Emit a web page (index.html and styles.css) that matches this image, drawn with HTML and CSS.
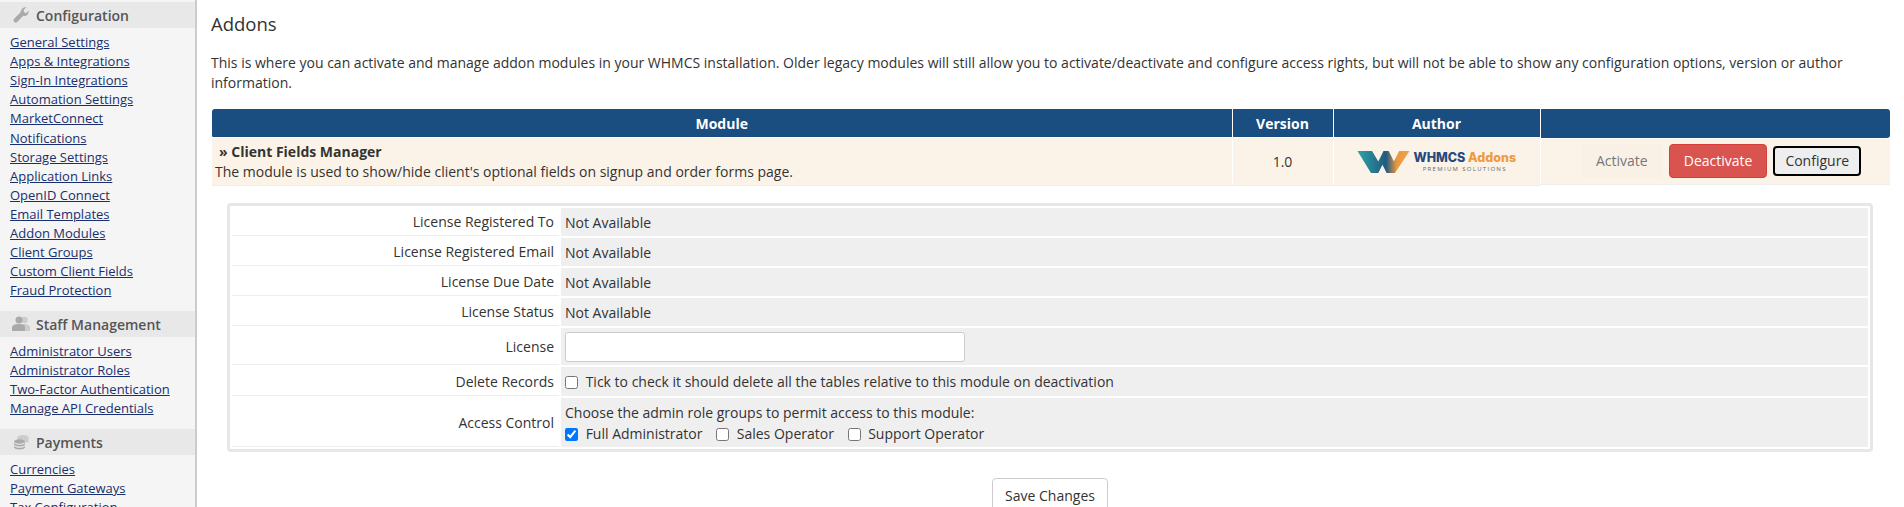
FILE: index.html
```html
<!DOCTYPE html>
<html lang="en">
<head>
    <meta charset="UTF-8">
    <meta name="viewport" content="width=device-width, initial-scale=1.0">
    <title>Addons</title>
    <link rel="stylesheet" href="styles.css">
</head>
<body>
    <div class="page">
        <div class="sidebar">
            <div class="side-header">
                <svg class="side-icon" viewBox="0 0 16 16"><path d="M15.6 3.6c.3 1.500-.1 3-1.200 4.100-1.100 1.100-2.700 1.500-4.200 1.100l-6 6.100c-.8.800-2.100.8-2.900 0l-.2-.2c-.8-.8-.8-2.100 0-2.900l6.100-6.100C7.800 4.200 8.200 2.600 9.300 1.500 10.400.4 11.900 0 13.400.3L10.600 3.100l.6 2.300 2.300.6 2.100-2.400z"/></svg>
                Configuration
            </div>
            <ul class="side-links">
                <li><a href="#">General Settings</a></li>
                <li><a href="#">Apps &amp; Integrations</a></li>
                <li><a href="#">Sign-In Integrations</a></li>
                <li><a href="#">Automation Settings</a></li>
                <li class="gap-after"><a href="#">MarketConnect</a></li>
                <li><a href="#">Notifications</a></li>
                <li><a href="#">Storage Settings</a></li>
                <li><a href="#">Application Links</a></li>
                <li><a href="#">OpenID Connect</a></li>
                <li><a href="#">Email Templates</a></li>
                <li><a href="#">Addon Modules</a></li>
                <li><a href="#">Client Groups</a></li>
                <li><a href="#">Custom Client Fields</a></li>
                <li><a href="#">Fraud Protection</a></li>
            </ul>
            <div class="side-header">
                <svg class="side-icon icon-wide" viewBox="0 0 18 16"><circle cx="12.500" cy="4" r="3.200" fill="#ccc"/><path fill="#ccc" d="M9 15V11c0-1.800 1.500-3 3.500-3s5.500 1.200 5.500 3.500V15z"/><circle cx="7" cy="4" r="3.500"/><path d="M0 15v-3.500C0 9.500 2.500 8 7 8s6 1.500 6 3.500V15z"/></svg>
                Staff Management
            </div>
            <ul class="side-links">
                <li><a href="#">Administrator Users</a></li>
                <li><a href="#">Administrator Roles</a></li>
                <li><a href="#">Two-Factor Authentication</a></li>
                <li><a href="#">Manage API Credentials</a></li>
            </ul>
            <div class="side-header">
                <svg class="side-icon" viewBox="0 0 16 16"><ellipse cx="10" cy="3.500" rx="5.500" ry="2.500" fill="#ccc"/><rect x="4.500" y="3.500" width="11" height="5" fill="#ccc"/><ellipse cx="6.500" cy="7.500" rx="5.500" ry="2.200"/><path d="M1 8.700c1 1.500 2.800 2 5.500 2s4.500-.5 5.500-2v1.800c-.5 1.200-2.500 2-5.500 2s-5-.8-5.500-2z"/><path d="M1 11.700c1 1.500 2.800 2 5.500 2s4.500-.5 5.500-2v1.800c-.5 1.200-2.500 2-5.500 2s-5-.8-5.500-2z"/></svg>
                Payments
            </div>
            <ul class="side-links">
                <li><a href="#">Currencies</a></li>
                <li><a href="#">Payment Gateways</a></li>
                <li><a href="#">Tax Configuration</a></li>
            </ul>
        </div>

        <div class="content">
            <h1>Addons</h1>
            <p class="intro">This is where you can activate and manage addon modules in your WHMCS installation. Older legacy modules will still allow you to activate/deactivate and configure access rights, but will not be able to show any configuration options, version or author information.</p>

            <table class="modules">
                <colgroup>
                    <col>
                    <col class="col-version">
                    <col class="col-author">
                    <col class="col-actions">
                </colgroup>
                <tr>
                    <th>Module</th>
                    <th>Version</th>
                    <th>Author</th>
                    <th></th>
                </tr>
                <tr>
                    <td class="module-name">
                        <strong>» Client Fields Manager</strong><br>
                        The module is used to show/hide client's optional fields on signup and order forms page.
                    </td>
                    <td class="center">1.0</td>
                    <td class="center">
                        <div class="logo">
                            <svg class="logo-mark" viewBox="0 0 50 24">
                                <defs>
                                    <linearGradient id="logoFill" x1="0" x2="1" y1="0" y2="0">
                                        <stop offset="0" stop-color="#2fa3a8"/>
                                        <stop offset="0.55" stop-color="#1f5a80"/>
                                        <stop offset="0.75" stop-color="#e9973f"/>
                                        <stop offset="1" stop-color="#f0a54a"/>
                                    </linearGradient>
                                </defs>
                                <path fill="url(#logoFill)" d="M0 2h14l6 10 5-10h5l5 10 5-10h10L36 23h-8l-4-8-4 8h-7z"/>
                            </svg>
                            <div class="logo-text">
                                <div class="logo-title">WHMCS <span class="logo-orange">Addons</span></div>
                                <div class="logo-sub">PREMIUM SOLUTIONS</div>
                            </div>
                        </div>
                    </td>
                    <td class="actions">
                        <a class="btn btn-disabled" href="#">Activate</a>
                        <a class="btn btn-danger" href="#">Deactivate</a>
                        <a class="btn btn-focus" href="#">Configure</a>
                    </td>
                </tr>
            </table>

            <div class="config-box">
                <table class="config">
                    <tr class="row-info">
                        <td class="label">License Registered To</td>
                        <td class="field">Not Available</td>
                    </tr>
                    <tr class="row-info">
                        <td class="label">License Registered Email</td>
                        <td class="field">Not Available</td>
                    </tr>
                    <tr class="row-info">
                        <td class="label">License Due Date</td>
                        <td class="field">Not Available</td>
                    </tr>
                    <tr class="row-info">
                        <td class="label">License Status</td>
                        <td class="field">Not Available</td>
                    </tr>
                    <tr class="row-input">
                        <td class="label">License</td>
                        <td class="field"><input class="text-input" type="text"></td>
                    </tr>
                    <tr class="row-check">
                        <td class="label">Delete Records</td>
                        <td class="field"><label class="check"><input type="checkbox"> Tick to check it should delete all the tables relative to this module on deactivation</label></td>
                    </tr>
                    <tr class="row-access">
                        <td class="label">Access Control</td>
                        <td class="field">
                            Choose the admin role groups to permit access to this module:<br>
                            <label class="check"><input type="checkbox" checked> Full Administrator</label>
                            <label class="check"><input type="checkbox"> Sales Operator</label>
                            <label class="check"><input type="checkbox"> Support Operator</label>
                        </td>
                    </tr>
                </table>
            </div>

            <div class="save-row">
                <button class="save">Save Changes</button>
            </div>
        </div>
    </div>
</body>
</html>
```

FILE: styles.css
```css
html, body {
    margin: 0;
    padding: 0;
    height: 507px;
    overflow: hidden;
}

body {
    font-family: "Open Sans", Arial, sans-serif;
    font-size: 14px;
    color: #333;
    background-color: #fff;
}

.page {
    display: flex;
    height: 507px;
}

.sidebar {
    width: 195px;
    flex: none;
    padding-top: 2px;
    background-color: #f5f5f5;
    border-right: 2px solid #ccc;
    overflow: hidden;
}

.side-header {
    display: flex;
    align-items: center;
    height: 26px;
    padding-left: 13px;
    background-color: #e8e8e8;
    color: #555;
    font-size: 14px;
    font-weight: 600;
}

.side-icon {
    width: 16px;
    height: 16px;
    margin-right: 7px;
    fill: #aaa;
}

.icon-wide {
    width: 18px;
    margin-left: -1px;
    margin-right: 6px;
}

.side-links {
    list-style: none;
    margin: 0;
    padding: 5px 0 11px 10px;
    font-size: 13px;
    line-height: 19px;
}

.side-links a {
    color: #1a2f6e;
}

.gap-after {
    margin-bottom: 1px;
}

.content {
    flex: 1;
    min-width: 0;
    padding: 0 15px 0 14px;
}

h1 {
    margin: 0;
    padding-top: 10px;
    font-size: 18.500px;
    line-height: 27px;
    font-weight: 400;
    color: #333;
}

.intro {
    margin: 16px 0 16px;
    line-height: 20px;
}

.modules {
    width: 100%;
    margin-left: 1px;
    border-collapse: collapse;
    table-layout: fixed;
}

.col-version {
    width: 101px;
}

.col-author {
    width: 207px;
}

.col-actions {
    width: 350px;
}

.modules th {
    height: 28px;
    padding: 0;
    background-color: #1a4d80;
    color: #fff;
    font-weight: 700;
    text-align: center;
    border-left: 1px solid #fff;
}

.modules th:first-child {
    border-left: none;
    border-radius: 3px 0 0 3px;
}

.modules th:last-child {
    border-radius: 0 3px 3px 0;
}

.modules td {
    height: 47px;
    padding: 0;
    background-color: #fcf3e8;
    border-left: 1px solid #fff;
    border-top: 1px solid #fff;
    border-bottom: 1px solid #eee;
}

.modules td:first-child {
    border-left: none;
}

.module-name {
    padding-left: 3px !important;
    line-height: 20px;
}

.module-name strong {
    padding-left: 4px;
    font-weight: 700;
}

.center {
    text-align: center;
}

.logo {
    display: flex;
    align-items: center;
    justify-content: center;
    gap: 3px;
}

.logo-mark {
    width: 53px;
    height: 25px;
}

.logo-text {
    text-align: center;
}

.logo-title {
    font-family: Inter, sans-serif;
    font-size: 12.500px;
    line-height: 14px;
    font-weight: 800;
    color: #27497f;
}

.logo-orange {
    color: #ee9a43;
}

.logo-sub {
    font-size: 6px;
    line-height: 8px;
    letter-spacing: 1.300px;
    color: #666;
}

.actions {
    display: flex;
    align-items: center;
    gap: 6px;
    padding-left: 40px !important;
    box-sizing: border-box;
}

.btn {
    display: inline-block;
    box-sizing: border-box;
    height: 34px;
    line-height: 32px;
    padding: 0 14px;
    border: 1px solid transparent;
    border-radius: 4px;
    text-decoration: none;
    color: #333;
}

.btn-disabled {
    color: #777;
    background-color: #faf1e6;
}

.btn-danger {
    background-color: #d9534f;
    border-color: #d43f3a;
    color: #fff;
}

.btn-focus {
    height: 30px;
    line-height: 26px;
    padding: 0 10px;
    background-color: #eee;
    border: 2px solid #000;
}

.config-box {
    margin: 17px 16px 0 16px;
    border: 3px solid #e3e8ea;
    border-radius: 4px;
}

.config {
    width: 100%;
    border-collapse: separate;
    border-spacing: 2px;
}

.config td {
    padding: 0;
}

.label {
    width: 322px;
    padding-right: 5px !important;
    text-align: right;
    border-bottom: 1px solid #eee;
}

.field {
    padding-left: 4px !important;
    background-color: #efefef;
}

.row-info td {
    height: 27px;
}

.row-input td {
    height: 36px;
}

.row-check td {
    height: 28px;
}

.row-access td {
    height: 48px;
    line-height: 21px;
}

.text-input {
    display: block;
    box-sizing: border-box;
    width: 400px;
    height: 30px;
    padding: 0 6px;
    border: 1px solid #ccc;
    border-radius: 3px;
    background-color: #fff;
}

.check {
    margin-right: 10px;
}

.check input {
    width: 13px;
    height: 13px;
    margin: 0 4px 0 0;
    vertical-align: -2px;
}

.save-row {
    margin-top: 26px;
    text-align: center;
}

.save {
    height: 34px;
    padding: 0 12px;
    font-family: "Open Sans", Arial, sans-serif;
    font-size: 14px;
    color: #333;
    background-color: #fff;
    border: 1px solid #ccc;
    border-radius: 4px;
}
```
